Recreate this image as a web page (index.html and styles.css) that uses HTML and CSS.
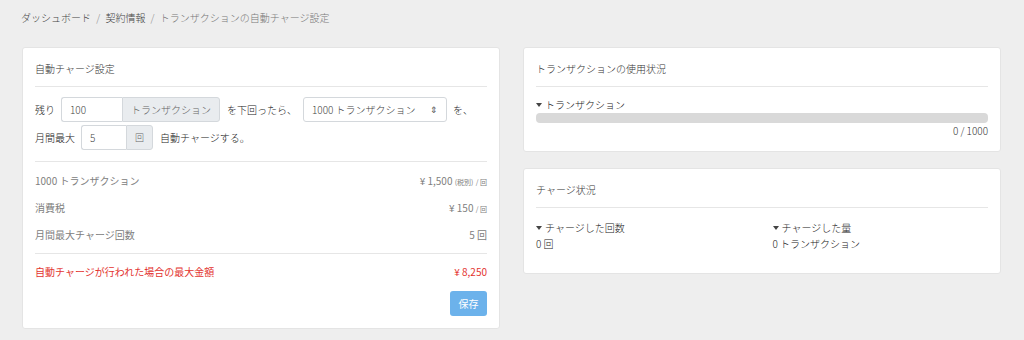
FILE: index.html
```html
<!DOCTYPE html>
<html lang="ja">
<head>
  <meta charset="UTF-8" />
  <title>トランザクションの自動チャージ設定</title>
  <link rel="stylesheet" href="styles.css">
</head>
<body>
  <div class="breadcrumb">
    <span class="crumb">ダッシュボード</span>
    <span class="sep">/</span>
    <span class="crumb">契約情報</span>
    <span class="sep">/</span>
    <span class="crumb current">トランザクションの自動チャージ設定</span>
  </div>

  <div class="main">
    <div class="card settings">
      <div class="card-header">自動チャージ設定</div>
      <div class="form">
        <div class="form-row">
          <span class="word">残り</span>
          <div class="input-group">
            <div class="input w-count">100</div>
            <div class="addon">トランザクション</div>
          </div>
          <span class="word">を下回ったら、</span>
          <div class="select">1000 トランザクション<span class="arrows">&#8661;</span></div>
          <span class="word">を、</span>
        </div>
        <div class="form-row">
          <span class="word">月間最大</span>
          <div class="input-group">
            <div class="input w-times">5</div>
            <div class="addon small">回</div>
          </div>
          <span class="word">自動チャージする。</span>
        </div>
      </div>
      <div class="breakdown">
        <div class="line"><span>1000 トランザクション</span><span class="price">¥ 1,500 <small>(税別)</small> <small>/ 回</small></span></div>
        <div class="line"><span>消費税</span><span class="price">¥ 150 <small>/ 回</small></span></div>
        <div class="line"><span>月間最大チャージ回数</span><span class="price">5 回</span></div>
      </div>
      <div class="line total"><span>自動チャージが行われた場合の最大金額</span><span>¥ 8,250</span></div>
      <div class="actions"><button class="btn-save">保存</button></div>
    </div>

    <div class="side">
      <div class="card usage">
        <div class="card-header">トランザクションの使用状況</div>
        <div class="stat-label"><span class="caret"></span>トランザクション</div>
        <div class="progress"><div class="progress-bar" style="width: 0%"></div></div>
        <div class="progress-text">0 / 1000</div>
      </div>

      <div class="card charges">
        <div class="card-header">チャージ状況</div>
        <div class="stats">
          <div>
            <div class="stat-label"><span class="caret"></span>チャージした回数</div>
            <div class="stat-value">0 回</div>
          </div>
          <div>
            <div class="stat-label"><span class="caret"></span>チャージした量</div>
            <div class="stat-value">0 トランザクション</div>
          </div>
        </div>
      </div>
    </div>
  </div>
</body>
</html>
```

FILE: styles.css
```css
body {
  margin: 0;
  background: #eeeeee;
  font-family: "Noto Sans CJK JP", "Noto Sans", sans-serif;
  font-size: 10px;
  font-weight: 300;
  color: #444;
}
.breadcrumb {
  padding: 10px 21px 0;
  line-height: 15px;
  height: 15px;
  color: #444;
}
.breadcrumb .sep {
  color: #888;
  margin: 0 3px;
}
.breadcrumb .current {
  color: #777;
}
.main {
  display: grid;
  grid-template-columns: 1fr 1fr;
  gap: 23px;
  padding: 22px 23px 0 22px;
  align-items: start;
}
.card {
  background: #fff;
  border: 1px solid #e4e4e4;
  border-radius: 3px;
  padding: 0 12px;
}
.card-header {
  padding: 14px 0 10px;
  line-height: 14px;
  border-bottom: 1px solid #e6e6e6;
  color: #333;
}
.form {
  padding: 10px 0 11px;
  border-bottom: 1px solid #e6e6e6;
  color: #222;
}
.form-row {
  display: flex;
  align-items: center;
  height: 25px;
}
.form-row + .form-row {
  margin-top: 3px;
}
.word {
  margin-right: 6px;
  white-space: nowrap;
}
.input-group {
  display: flex;
  height: 25px;
  margin-right: 7px;
}
.input {
  border: 1px solid #d4d8dc;
  border-right: none;
  border-radius: 3px 0 0 3px;
  padding: 0 8px;
  line-height: 23px;
  color: #444;
  box-sizing: border-box;
}
.w-count {
  width: 61px;
}
.w-times {
  width: 45px;
}
.addon {
  background: #e9ecef;
  border: 1px solid #d4d8dc;
  border-radius: 0 3px 3px 0;
  line-height: 23px;
  padding: 0 8px;
  color: #666;
  box-sizing: border-box;
  min-width: 97px;
  text-align: center;
  white-space: nowrap;
}
.addon.small {
  min-width: 27px;
  padding: 0;
  font-size: 9px;
}
.select {
  width: 144px;
  height: 25px;
  box-sizing: border-box;
  border: 1px solid #d4d8dc;
  border-radius: 3px;
  line-height: 23px;
  padding: 0 8px;
  display: flex;
  justify-content: space-between;
  margin-right: 6px;
  color: #444;
  white-space: nowrap;
}
.select .arrows {
  font-size: 9px;
  color: #555;
}
.breakdown {
  padding: 6px 0 5px;
  border-bottom: 1px solid #e6e6e6;
}
.line {
  display: flex;
  justify-content: space-between;
  line-height: 26px;
  color: #808080;
  font-weight: 400;
}
.price small {
  font-size: 7px;
}
.total {
  margin-top: 5px;
  color: #e3342f;
}
.actions {
  display: flex;
  justify-content: flex-end;
  padding: 6px 0 12px;
}
.btn-save {
  background: #6cb2eb;
  border: none;
  border-radius: 3px;
  color: #fff;
  font-family: inherit;
  font-size: 10px;
  width: 37px;
  height: 25px;
  padding: 0;
}
.side {
  display: flex;
  flex-direction: column;
  gap: 16px;
}
.stat-label {
  line-height: 14px;
  color: #222;
}
.caret {
  display: inline-block;
  width: 0;
  height: 0;
  border-left: 3px solid transparent;
  border-right: 3px solid transparent;
  border-top: 4px solid #444;
  margin-right: 3px;
  vertical-align: 2px;
}
.usage .stat-label {
  margin-top: 11px;
}
.progress {
  height: 10px;
  margin-top: 1px;
  background: #d9d9d9;
  border-radius: 4px;
  overflow: hidden;
}
.progress-bar {
  height: 100%;
  background: #6cb2eb;
}
.progress-text {
  text-align: right;
  line-height: 16px;
  color: #333;
  padding-bottom: 12px;
}
.stats {
  display: grid;
  grid-template-columns: 1fr 1fr;
  gap: 21px;
  padding: 12px 0 21px;
}
.stats .stat-label {
  line-height: 16px;
}
.stat-value {
  line-height: 16px;
  color: #222;
}
```
